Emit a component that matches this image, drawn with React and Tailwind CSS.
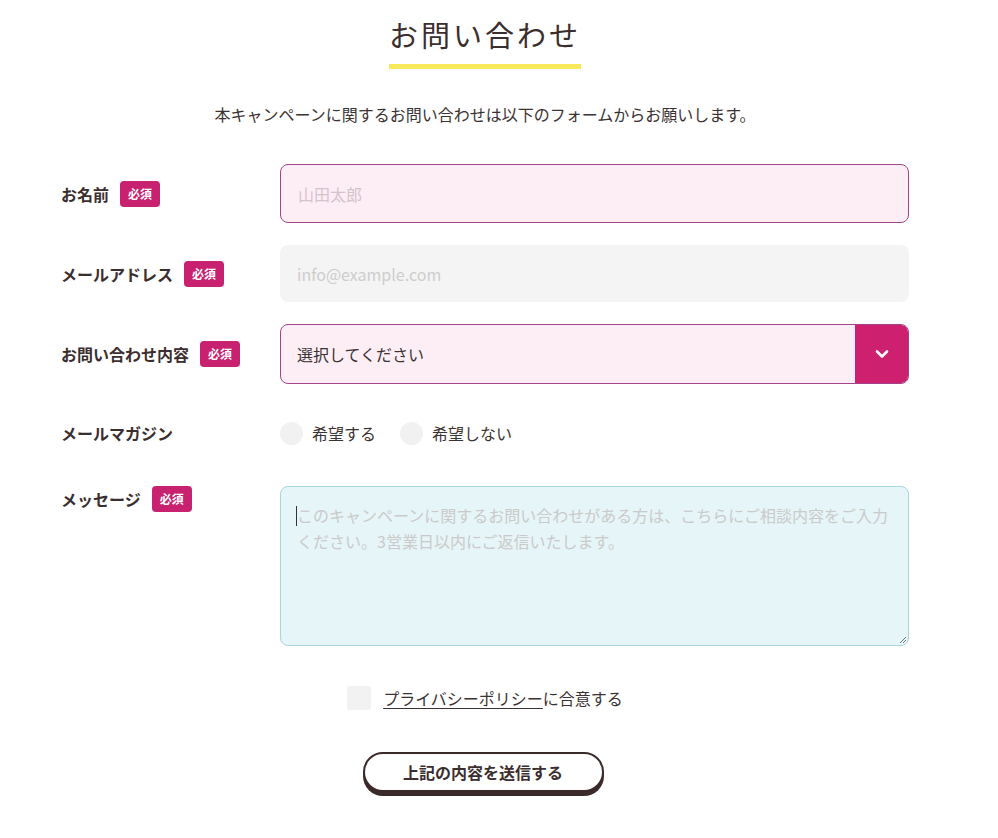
import React from "react";

const font = { fontFamily: '"Noto Sans CJK JP", "Noto Sans", sans-serif' };

function Badge() {
  return (
    <span className="inline-flex items-center justify-center w-[40px] h-[26px] rounded-[4px] bg-[#c8216f] text-white text-[12px] font-bold leading-none">
      必須
    </span>
  );
}

function Label({ children, required }) {
  return (
    <div className="w-[219px] shrink-0 flex items-center gap-[11px] text-[16px] font-bold text-[#3b2e2e]">
      <span>{children}</span>
      {required && <Badge />}
    </div>
  );
}

export default function App() {
  return (
    <div className="min-h-screen bg-white text-[#3b2e2e]" style={font}>
      <div className="flex flex-col items-center pt-[14px] w-[970px]">
        <h1 className="text-[29px] leading-[40px] tracking-[3px] text-[#3b2e2e] font-normal">お問い合わせ</h1>
        <div className="mt-[10px] w-[192px] h-[5px] bg-[#f7e95b]"></div>
        <p className="mt-[33px] text-[16px] leading-[24px] text-[#3b3232]">本キャンペーンに関するお問い合わせは以下のフォームからお願いします。</p>
      </div>

      <div className="pl-[61px] mt-[38px] w-[909px]">
        <div className="flex items-center">
          <Label required>お名前</Label>
          <div className="flex-1 h-[59px] rounded-[8px] border border-[#a3448a] bg-[#fdeef6] flex items-center px-[17px] text-[16px] text-[#d6c2cc]">
            山田太郎
          </div>
        </div>

        <div className="flex items-center mt-[22px]">
          <Label required>メールアドレス</Label>
          <div className="flex-1 h-[57px] rounded-[8px] bg-[#f4f4f4] flex items-center px-[17px] text-[16px] text-[#cdcdcd]">
            info@example.com
          </div>
        </div>

        <div className="flex items-center mt-[22px]">
          <Label required>お問い合わせ内容</Label>
          <div className="flex-1 h-[60px] rounded-[8px] border border-[#a3448a] bg-[#fdeef6] flex items-stretch overflow-hidden">
            <div className="flex-1 flex items-center px-[16px] text-[16px] text-[#3b3232]">選択してください</div>
            <div className="w-[53px] bg-[#cd2170] flex items-center justify-center">
              <svg width="16" height="16" viewBox="0 0 16 16" fill="none">
                <path d="M3 5.5 L8 10.5 L13 5.5" stroke="white" strokeWidth="2.6" strokeLinecap="round" strokeLinejoin="round" />
              </svg>
            </div>
          </div>
        </div>

        <div className="flex items-center mt-[37px]">
          <Label>メールマガジン</Label>
          <div className="flex items-center text-[16px] text-[#3b3232]">
            <span className="w-[23px] h-[23px] rounded-full bg-[#f1f1f1]"></span>
            <span className="ml-[9px]">希望する</span>
            <span className="ml-[24px] w-[23px] h-[23px] rounded-full bg-[#f1f1f1]"></span>
            <span className="ml-[9px]">希望しない</span>
          </div>
        </div>

        <div className="flex items-start mt-[41px]">
          <div className="w-[219px] shrink-0 flex items-start gap-[11px] text-[16px] font-bold text-[#3b2e2e]">
            <span className="leading-[26px]">メッセージ</span>
            <Badge />
          </div>
          <div className="relative flex-1 h-[160px] rounded-[8px] border border-[#a9d5dd] bg-[#e6f5f7] px-[16px] pt-[15px] text-[16px] leading-[26px] text-[#cacaca]">
            <span className="absolute left-[15px] top-[19px] w-[1px] h-[20px] bg-[#333]"></span>
            <div className="leading-[26px]">このキャンペーンに関するお問い合わせがある方は、こちらにご相談内容をご入力ください。3営業日以内にご返信いたします。</div>
            <svg className="absolute right-[1px] bottom-[1px]" width="9" height="9" viewBox="0 0 9 9">
              <path d="M8 2 L2 8 M8 5 L5 8" stroke="#777" strokeWidth="1" />
            </svg>
          </div>
        </div>

        <div className="flex items-center justify-center mt-[40px] w-[848px]">
          <div className="flex items-center">
            <span className="w-[24px] h-[24px] rounded-[2px] bg-[#f2f2f2]"></span>
            <span className="ml-[12px] text-[16px] text-[#3b3232]">
              <span className="underline underline-offset-[3px]">プライバシーポリシー</span>に合意する
            </span>
          </div>
        </div>

        <div className="flex justify-center mt-[42px] w-[848px] pr-[4px]">
          <button className="w-[241px] h-[40px] rounded-full border-2 border-[#3b2a2a] bg-white shadow-[0_4px_0_#3b2a2a] text-[16px] font-bold text-[#3b2e2e]" style={font}>
            上記の内容を送信する
          </button>
        </div>
      </div>
    </div>
  );
}
